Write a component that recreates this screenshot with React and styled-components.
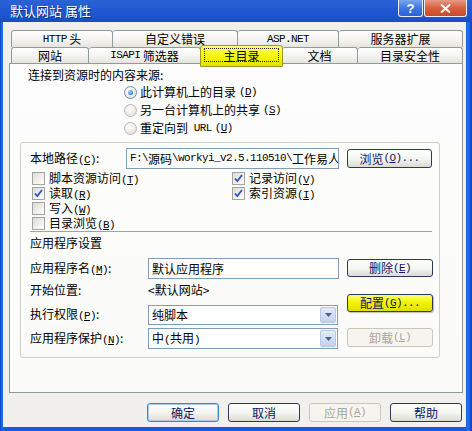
import styled, { createGlobalStyle } from 'styled-components';

const GlobalStyle = createGlobalStyle`
  html, body { margin: 0; padding: 0; background: #fff; }
  body {
    font-family: "Noto Sans CJK SC", "Liberation Sans", sans-serif;
    font-size: 12px;
    color: #000;
  }
  * { box-sizing: border-box; }
`;

const Window = styled.div`
  width: 472px;
  height: 431px;
  display: flex;
  flex-direction: column;
  background: linear-gradient(to right, #0b3fc4 0, #2a6ff0 2px, #1b5ade 3px, #1b5ade 466px, #2a6ff0 468px, #0b3fc4 472px);
  overflow: hidden;
`;

const TitleBar = styled.div`
  height: 22px;
  flex: none;
  display: flex;
  align-items: flex-start;
  background: linear-gradient(to bottom, #2a63d6 0%, #225ad4 40%, #1c52cc 80%, #1a4cc2 100%);
`;

const TitleText = styled.div`
  margin: 3px 0 0 10px;
  color: #fff;
  font-size: 13px;
  line-height: 16px;
  text-shadow: 1px 1px 0 #0a2a88;
`;

const TitleButtons = styled.div`
  margin-left: auto;
  margin-right: 5px;
  display: flex;
  gap: 1px;
`;

const CapBtn = styled.div`
  width: ${p => p.$w}px;
  height: 17px;
  border: 1px solid #e8eefc;
  border-top: none;
  border-radius: 0 0 3px 3px;
  display: flex;
  align-items: center;
  justify-content: center;
  color: #fff;
  font-family: "Liberation Sans", sans-serif;
  font-weight: bold;
  font-size: 13px;
  background: ${p => p.$red
    ? 'linear-gradient(to bottom, #e89a86, #d7603f 50%, #c84a2c)'
    : 'linear-gradient(to bottom, #7aa6f0, #3f77e2 50%, #2c62d4)'};
`;

const Body = styled.div`
  flex: 1;
  margin: 0 6px 4px 3px;
  padding: 8px 3px 0 6px;
  background: #f1f0ec;
  display: flex;
  flex-direction: column;
`;

const TabRow = styled.div`
  display: flex;
  height: ${p => p.$h}px;
  padding-left: 2px;
  flex: none;
`;

const Tab = styled.div`
  width: ${p => p.$w}px;
  height: 100%;
  flex: none;
  border: 1px solid #919b9c;
  border-bottom: none;
  border-left-width: ${p => (p.$first ? 1 : 0)}px;
  border-radius: 3px 3px 0 0;
  background: linear-gradient(to bottom, #ffffff, #f3f2ee 60%, #e6e4dc);
  display: flex;
  align-items: center;
  justify-content: center;
  line-height: 14px;
  white-space: nowrap;
`;

const ActiveTab = styled.div`
  position: relative;
  z-index: 2;
  width: 83px;
  height: 22px;
  margin: -2px -1px -4px -1px;
  flex: none;
  border: 1px solid #9a9a30;
  border-radius: 3px 3px 0 0;
  background: linear-gradient(to bottom, #ffff7a, #f4f400 55%, #e2e200);
  display: flex;
  align-items: center;
  justify-content: center;
  padding-bottom: 2px;
`;

const FocusRect = styled.span`
  border: 1px dotted #222;
  width: 75px;
  height: 14px;
  display: flex;
  align-items: center;
  justify-content: center;
  line-height: 13px;
`;

const Panel = styled.div`
  height: 330px;
  flex: none;
  border: 1px solid #919b9c;
  background: linear-gradient(to bottom, #fdfdfd, #fbfbf9);
  padding-top: 3px;
  display: flex;
  flex-direction: column;
`;

const Line = styled.div`
  height: ${p => p.$h || 16}px;
  margin-left: ${p => p.$ml || 0}px;
  display: flex;
  align-items: center;
  line-height: 14px;
  white-space: nowrap;
  flex: none;
`;

const RadioList = styled.div`
  margin-left: 114px;
  display: flex;
  flex-direction: column;
`;

const RadioRow = styled.div`
  height: 18px;
  display: flex;
  align-items: center;
  gap: 3px;
  white-space: nowrap;
  line-height: 14px;
`;

const RadioDot = styled.span`
  width: 13px;
  height: 13px;
  flex: none;
  border-radius: 50%;
  border: 1px solid ${p => (p.$on ? '#6d8cb4' : '#b8b8b0')};
  background: radial-gradient(circle at 40% 35%, #ffffff, #dddbd3);
  display: flex;
  align-items: center;
  justify-content: center;
  &::after {
    content: '';
    width: 5px;
    height: 5px;
    border-radius: 50%;
    background: ${p => (p.$on ? 'radial-gradient(circle at 35% 35%, #9fd8ff, #1664c4)' : 'transparent')};
  }
`;

const Frame = styled.div`
  width: 420px;
  height: 216px;
  margin: 5px 0 0 10px;
  flex: none;
  border: 1px solid #d0d0bf;
  border-radius: 3px;
  padding: 5px 0 0 9px;
  display: flex;
  flex-direction: column;
`;

const FieldRow = styled.div`
  display: flex;
  align-items: center;
  height: ${p => p.$h}px;
  margin-top: ${p => p.$mt || 0}px;
  flex: none;
  line-height: 14px;
`;

const Label = styled.span`
  width: ${p => p.$w}px;
  flex: none;
  line-height: 14px;
  white-space: nowrap;
`;

const TextBox = styled.div`
  width: ${p => p.$w}px;
  height: ${p => p.$h}px;
  flex: none;
  border: 1px solid #7f9db9;
  background: #fff;
  display: flex;
  align-items: center;
  padding-left: 3px;
  white-space: nowrap;
  overflow: hidden;
  line-height: 14px;
`;

const SelectBox = styled(TextBox)`
  padding-right: 1px;
  justify-content: space-between;
`;

const DropArrow = styled.span`
  width: 16px;
  height: calc(100% - 2px);
  flex: none;
  border: 1px solid #b7c7e6;
  border-radius: 2px;
  background: linear-gradient(to bottom, #e4ebf8, #c3d1ec);
  display: flex;
  align-items: center;
  justify-content: center;
`;

const Btn = styled.button`
  width: ${p => p.$w}px;
  height: ${p => p.$h || 19}px;
  margin-top: ${p => p.$mt || 0}px;
  margin-left: ${p => p.$ml || 0}px;
  flex: none;
  padding: 0;
  font-family: inherit;
  font-size: 12px;
  line-height: 14px;
  white-space: nowrap;
  border-radius: 3px;
  border: 1px solid ${p => (p.$disabled ? '#c9c7ba' : p.$default ? '#3a86d4' : '#2a3a5c')};
  color: ${p => (p.$disabled ? '#a8a89a' : '#0f1466')};
  background: ${p => p.$yellow
    ? 'linear-gradient(to bottom, #ffff70, #f2f200 50%, #dede00)'
    : p.$disabled
      ? '#f5f4ee'
      : 'linear-gradient(to bottom, #ffffff, #f4f4f0 55%, #dcdad2)'};
  box-shadow: ${p => (p.$default ? 'inset 0 0 0 1px #a9ccf4' : p.$yellow ? '1px 1px 1px rgba(0,0,0,0.25)' : 'none')};
  display: flex;
  align-items: center;
  justify-content: center;
`;

const CheckGrid = styled.div`
  display: grid;
  grid-template-columns: 200px 1fr;
  grid-auto-rows: 15px;
  margin-top: 2px;
  flex: none;
`;

const CheckItem = styled.div`
  display: flex;
  align-items: center;
  gap: 4px;
  padding-left: 2px;
  height: 15px;
  white-space: nowrap;
  line-height: 13px;
  overflow: visible;
`;

const Box = styled.span`
  width: 13px;
  height: 13px;
  flex: none;
  border: 1px solid #a5a5a0;
  background: linear-gradient(135deg, #dcdcd6, #ffffff);
  display: flex;
  align-items: center;
  justify-content: center;
`;

const Separator = styled.div`
  width: 402px;
  height: 1px;
  background: #a2a2a0;
  flex: none;
`;

const AppArea = styled.div`
  display: flex;
  gap: 8px;
  margin-top: 8px;
`;

const Column = styled.div`
  display: flex;
  flex-direction: column;
  width: ${p => p.$w}px;
`;

const ButtonBar = styled.div`
  display: flex;
  justify-content: flex-end;
  gap: 9px;
  margin: 10px 1px 0 0;
`;

const Mono = styled.span`
  font-family: "Liberation Mono", monospace;
  font-size: 11px;
  letter-spacing: -0.6px;
  line-height: 13px;
`;

const Key = ({ k }) => (
  <Mono>(<u>{k}</u>)</Mono>
);

const Check = ({ on, children }) => (
  <CheckItem>
    <Box>
      {on && (
        <svg width="9" height="9" viewBox="0 0 9 9">
          <polyline points="1,4.5 3.3,7 8,1" fill="none" stroke="#2c55c4" strokeWidth="1.8" />
        </svg>
      )}
    </Box>
    <span>{children}</span>
  </CheckItem>
);

const Select = ({ w, h, children }) => (
  <SelectBox $w={w} $h={h}>
    <span>{children}</span>
    <DropArrow>
      <svg width="7" height="4" viewBox="0 0 7 4">
        <polygon points="0,0 7,0 3.5,4" fill="#4d6185" />
      </svg>
    </DropArrow>
  </SelectBox>
);

export default function App() {
  return (
    <>
      <GlobalStyle />
      <Window>
        <TitleBar>
          <TitleText>默认网站 属性</TitleText>
          <TitleButtons>
            <CapBtn $w={25}>?</CapBtn>
            <CapBtn $w={43} $red>
              <svg width="11" height="9" viewBox="0 0 11 9">
                <path d="M1 0.5 L10 8.5 M10 0.5 L1 8.5" stroke="#fff" strokeWidth="2" />
              </svg>
            </CapBtn>
          </TitleButtons>
        </TitleBar>

        <Body>
          <TabRow $h={17}>
            <Tab $w={102} $first><Mono>HTTP</Mono>&nbsp;头</Tab>
            <Tab $w={125}>自定义错误</Tab>
            <Tab $w={101}><Mono>ASP.NET</Mono></Tab>
            <Tab $w={124}>服务器扩展</Tab>
          </TabRow>
          <TabRow $h={16}>
            <Tab $w={78} $first>网站</Tab>
            <Tab $w={112}><Mono>ISAPI</Mono>&nbsp;筛选器</Tab>
            <ActiveTab><FocusRect>主目录</FocusRect></ActiveTab>
            <Tab $w={76}>文档</Tab>
            <Tab $w={105}>目录安全性</Tab>
          </TabRow>

          <Panel>
            <Line $ml={18}>连接到资源时的内容来源:</Line>
            <RadioList>
              <RadioRow><RadioDot $on />此计算机上的目录<Key k="D" /></RadioRow>
              <RadioRow><RadioDot />另一台计算机上的共享<Key k="S" /></RadioRow>
              <RadioRow><RadioDot />重定向到&nbsp;<Mono>URL</Mono><Key k="U" /></RadioRow>
            </RadioList>

            <Frame>
              <FieldRow $h={21}>
                <Label $w={96}>本地路径<Key k="C" />:</Label>
                <TextBox $w={213} $h={21}>
                  <Mono>F:\</Mono>源码<Mono>\workyi_v2.5.110510\</Mono>工作易人
                </TextBox>
                <Btn $w={85} $ml={8}>浏览<Key k="O" /><Mono>...</Mono></Btn>
              </FieldRow>

              <CheckGrid>
                <Check>脚本资源访问<Key k="T" /></Check>
                <Check on>记录访问<Key k="V" /></Check>
                <Check on>读取<Key k="R" /></Check>
                <Check on>索引资源<Key k="I" /></Check>
                <Check>写入<Key k="W" /></Check>
                <span />
                <Check>目录浏览<Key k="B" /></Check>
                <span />
              </CheckGrid>

              <Separator />
              <Line $h={14} style={{ marginTop: 4 }}>应用程序设置</Line>

              <AppArea>
                <Column $w={309}>
                  <FieldRow $h={21}>
                    <Label $w={118}>应用程序名<Key k="M" />:</Label>
                    <TextBox $w={191} $h={21}>默认应用程序</TextBox>
                  </FieldRow>
                  <FieldRow $h={22}>
                    <Label $w={118}>开始位置:</Label>
                    <span>&lt;默认网站&gt;</span>
                  </FieldRow>
                  <FieldRow $h={20} $mt={4}>
                    <Label $w={118}>执行权限<Key k="P" />:</Label>
                    <Select w={190} h={20}>纯脚本</Select>
                  </FieldRow>
                  <FieldRow $h={21} $mt={3}>
                    <Label $w={118}>应用程序保护<Key k="N" />:</Label>
                    <Select w={190} h={21}>中<Mono>(</Mono>共用<Mono>)</Mono></Select>
                  </FieldRow>
                </Column>
                <Column $w={86}>
                  <Btn $w={86} $h={18} $mt={1}>删除<Key k="E" /></Btn>
                  <Btn $w={86} $h={18} $mt={17} $yellow>配置<Key k="G" /><Mono>...</Mono></Btn>
                  <Btn $w={86} $h={19} $mt={16} $disabled>卸载<Key k="L" /></Btn>
                </Column>
              </AppArea>
            </Frame>
          </Panel>

          <ButtonBar>
            <Btn $w={72} $default>确定</Btn>
            <Btn $w={72}>取消</Btn>
            <Btn $w={72} $disabled>应用<Key k="A" /></Btn>
            <Btn $w={72}>帮助</Btn>
          </ButtonBar>
        </Body>
      </Window>
    </>
  );
}
